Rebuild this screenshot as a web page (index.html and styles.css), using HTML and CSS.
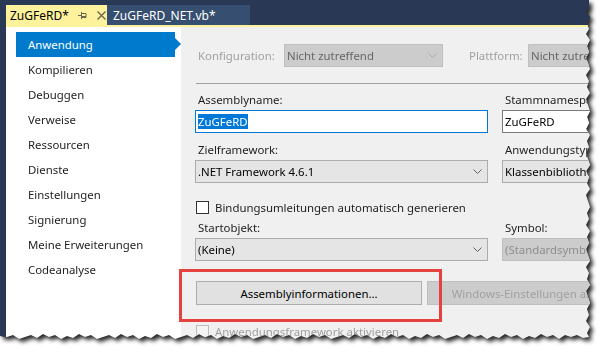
FILE: index.html
```html
<!DOCTYPE html>
<html lang="de">
<head>
<meta charset="utf-8">
<title>ZuGFeRD – Anwendung</title>
<link rel="stylesheet" href="styles.css">
</head>
<body>
<div class="frame">
  <div class="window">
    <div class="tabbar">
      <div class="tab tab-active">
        <span class="tab-title">ZuGFeRD*</span>
        <svg class="tab-pin" width="9" height="8" viewBox="0 0 9 8"><path d="M0 4.5H3M3.5 1V8M3.5 2.5H8V6.5H3.5M3.5 5.5H8" fill="none" stroke="#6b6850" stroke-width="1"/></svg>
        <svg class="tab-close" width="9" height="9" viewBox="0 0 9 9"><path d="M0.5 0.5L8.5 8.5M8.5 0.5L0.5 8.5" stroke="#6b6850" stroke-width="1.4"/></svg>
      </div>
      <div class="tab tab-inactive">ZuGFeRD_NET.vb*</div>
    </div>
    <div class="main">
      <div class="edge"></div>
      <div class="panel">
        <ul class="nav">
          <li class="nav-item nav-selected">Anwendung</li>
          <li class="nav-item">Kompilieren</li>
          <li class="nav-item">Debuggen</li>
          <li class="nav-item">Verweise</li>
          <li class="nav-item">Ressourcen</li>
          <li class="nav-item">Dienste</li>
          <li class="nav-item">Einstellungen</li>
          <li class="nav-item">Signierung</li>
          <li class="nav-item">Meine Erweiterungen</li>
          <li class="nav-item">Codeanalyse</li>
        </ul>
        <div class="content">
          <div class="cfg-row">
            <span class="cfg-label cfg-label-1 disabled-text">Konfiguration:</span>
            <div class="select select-disabled cfg-select-1">
              <span>Nicht zutreffend</span>
              <svg class="chev" width="9" height="5" viewBox="0 0 9 5"><polyline points="0.5,0.5 4.5,4.5 8.5,0.5" fill="none" stroke="#a8a8a8" stroke-width="1"/></svg>
            </div>
            <span class="cfg-label cfg-label-2 disabled-text">Plattform:</span>
            <div class="select select-disabled cfg-select-2">
              <span>Nicht zutreffend</span>
            </div>
          </div>
          <div class="sep"></div>

          <div class="grid grid-top">
            <div class="field">
              <label class="lbl">Assemblyname:</label>
              <div class="textbox textbox-focus"><span class="selected-text">ZuGFeRD</span></div>
            </div>
            <div class="field">
              <label class="lbl">Stammnamespace:</label>
              <div class="textbox">ZuGFeRD</div>
            </div>
            <div class="field">
              <label class="lbl">Zielframework:</label>
              <div class="select">
                <span>.NET Framework 4.6.1</span>
                <svg class="chev" width="9" height="5" viewBox="0 0 9 5"><polyline points="0.5,0.5 4.5,4.5 8.5,0.5" fill="none" stroke="#606060" stroke-width="1"/></svg>
              </div>
            </div>
            <div class="field">
              <label class="lbl">Anwendungstyp:</label>
              <div class="select"><span>Klassenbibliothek</span></div>
            </div>
          </div>

          <div class="check-row check-row-1">
            <span class="checkbox"></span>
            <span>Bindungsumleitungen automatisch generieren</span>
          </div>

          <div class="grid grid-start">
            <div class="field">
              <label class="lbl">Startobjekt:</label>
              <div class="select">
                <span>(Keine)</span>
                <svg class="chev" width="9" height="5" viewBox="0 0 9 5"><polyline points="0.5,0.5 4.5,4.5 8.5,0.5" fill="none" stroke="#606060" stroke-width="1"/></svg>
              </div>
            </div>
            <div class="field">
              <label class="lbl">Symbol:</label>
              <div class="select select-disabled select-dim"><span>(Standardsymbol)</span></div>
            </div>
          </div>

          <div class="btn-row">
            <button class="btn">Assemblyinformationen...</button>
            <button class="btn btn-disabled">Windows-Einstellungen anzeigen</button>
          </div>

          <div class="check-row check-row-2 disabled-text">
            <span class="checkbox checkbox-disabled"></span>
            <span>Anwendungsframework aktivieren</span>
          </div>
        </div>
      </div>
    </div>
    <div class="highlight"></div>
  </div>
</div>
</body>
</html>
```

FILE: styles.css
```css
* { box-sizing: border-box; }

html, body {
  margin: 0;
  padding: 0;
  background: #ffffff;
}

body {
  font-family: "Noto Sans", "Open Sans", sans-serif;
  font-size: 11.4px;
  color: #1e1e1e;
  width: 607px;
  height: 356px;
  overflow: hidden;
}

.frame {
  filter: drop-shadow(3px 3px 2px rgba(0, 0, 0, 0.85));
  width: 598px;
  height: 350px;
}

.window {
  position: relative;
  width: 592px;
  height: 342px;
  display: flex;
  flex-direction: column;
  background: #293955;
  clip-path: polygon(
    0 0, 589px 0, 589px 8px, 586px 12px, 590px 17px, 587px 23px, 589px 29px, 586px 34px,
    590px 40px, 587px 46px, 589px 52px, 586px 58px, 588px 63px, 590px 69px, 586px 75px,
    589px 81px, 587px 87px, 590px 93px, 586px 99px, 588px 105px, 590px 111px, 587px 117px,
    589px 123px, 586px 129px, 590px 135px, 587px 141px, 589px 147px, 586px 153px, 588px 159px,
    590px 165px, 586px 171px, 589px 177px, 587px 183px, 590px 189px, 586px 195px, 588px 201px,
    590px 207px, 587px 213px, 589px 219px, 586px 225px, 590px 231px, 587px 237px, 589px 243px,
    586px 249px, 588px 255px, 590px 261px, 586px 267px, 589px 273px, 587px 279px, 590px 285px,
    586px 291px, 588px 297px, 590px 303px, 587px 309px, 589px 315px, 586px 321px, 590px 327px,
    587px 333px, 589px 337px,
    583px 338px, 577px 335px, 571px 337px, 565px 335px, 559px 339px, 553px 335px, 547px 337px,
    541px 334px, 535px 338px, 529px 336px, 523px 339px, 517px 335px, 511px 337px, 505px 334px,
    499px 338px, 493px 336px, 487px 339px, 481px 335px, 475px 337px, 469px 334px, 463px 338px,
    457px 335px, 451px 337px, 445px 339px, 439px 335px, 433px 337px, 427px 334px, 421px 338px,
    415px 336px, 409px 339px, 403px 335px, 397px 337px, 391px 334px, 385px 338px, 379px 336px,
    373px 339px, 367px 335px, 361px 337px, 355px 334px, 349px 338px, 343px 335px, 337px 337px,
    331px 339px, 325px 335px, 319px 337px, 313px 334px, 307px 338px, 301px 336px, 295px 339px,
    289px 335px, 283px 337px, 277px 334px, 271px 338px, 265px 335px, 259px 337px, 253px 339px,
    247px 335px, 241px 337px, 235px 334px, 229px 338px, 223px 336px, 217px 339px, 211px 335px,
    205px 337px, 199px 334px, 193px 338px, 187px 335px, 181px 337px, 175px 339px, 169px 335px,
    163px 337px, 157px 334px, 151px 338px, 145px 336px, 139px 339px, 133px 335px, 127px 337px,
    121px 334px, 115px 338px, 109px 335px, 103px 337px, 97px 339px, 91px 335px, 85px 337px,
    79px 334px, 73px 338px, 67px 336px, 61px 339px, 55px 335px, 49px 337px, 43px 334px,
    37px 338px, 31px 335px, 25px 337px, 19px 339px, 13px 335px, 7px 337px, 0 336px
  );
}

/* ---------- tab bar ---------- */
.tabbar {
  height: 25px;
  flex: none;
  display: flex;
  align-items: flex-end;
  padding-left: 6px;
  background: #293955;
}

.tab {
  height: 20px;
  display: flex;
  align-items: center;
  font-size: 12px;
  white-space: nowrap;
}

.tab-active {
  width: 101px;
  background: #fff29d;
  color: #000000;
  padding-left: 4px;
}

.tab-title { width: 64px; }

.tab-pin { margin-left: 4px; }

.tab-close { margin-left: 10px; }

.tab-inactive {
  width: 143px;
  background: #364e6f;
  color: #ffffff;
  padding-left: 6px;
}

/* ---------- main ---------- */
.main {
  flex: 1;
  display: flex;
  min-height: 0;
}

.edge {
  width: 6px;
  flex: none;
  background: #293955;
}

.panel {
  flex: 1;
  display: flex;
  border-top: 2px solid #fff29d;
  min-width: 0;
}

/* ---------- nav ---------- */
.nav {
  list-style: none;
  margin: 0;
  padding: 5px 0 0 0;
  width: 175px;
  flex: none;
  background: #ffffff;
}

.nav-item {
  position: relative;
  height: 25px;
  width: 159px;
  margin-left: 10px;
  padding-left: 12px;
  display: flex;
  align-items: center;
  color: #1e1e1e;
  white-space: nowrap;
}

.nav-selected {
  background: #007acc;
  color: #ffffff;
}

.nav-selected::after {
  content: "";
  position: absolute;
  left: 159px;
  top: 6px;
  border-left: 6px solid #007acc;
  border-top: 6px solid transparent;
  border-bottom: 6px solid transparent;
}

/* ---------- content ---------- */
.content {
  flex: 1;
  background: #f0f0f0;
  padding: 17px 0 0 14px;
  overflow: hidden;
  min-width: 0;
}

.disabled-text { color: #a0a0a0; }

.cfg-row {
  display: flex;
  align-items: center;
  height: 23px;
  white-space: nowrap;
}

.cfg-label { padding-left: 3px; flex: none; }
.cfg-label-1 { width: 89px; }
.cfg-label-2 { width: 62px; margin-left: 23px; }

.cfg-select-1 { width: 159px; flex: none; padding-right: 6px; }
.cfg-select-2 { width: 160px; flex: none; }

.sep {
  height: 1px;
  background: #a0a0a0;
  margin: 16px 0 0 1px;
  width: 420px;
}

.grid {
  display: grid;
  grid-template-columns: 293px 170px;
  column-gap: 14px;
  row-gap: 9px;
}

.grid-top { margin-top: 8px; }
.grid-start { margin-top: 5px; }

.field {
  display: flex;
  flex-direction: column;
  gap: 2px;
  min-width: 0;
}

.lbl {
  padding-left: 3px;
  line-height: 16px;
  height: 16px;
  white-space: nowrap;
  color: #1e1e1e;
}

.textbox {
  height: 23px;
  background: #ffffff;
  border: 1px solid #7a7a7a;
  padding-left: 2px;
  display: flex;
  align-items: center;
  white-space: nowrap;
  color: #000000;
}

.textbox-focus { border-color: #0078d7; }

.selected-text {
  background: #0078d7;
  color: #ffffff;
  line-height: 15px;
}

.select {
  height: 23px;
  background: #e5e5e5;
  border: 1px solid #acacac;
  padding: 0 5px 0 2px;
  display: flex;
  align-items: center;
  white-space: nowrap;
  overflow: hidden;
  color: #000000;
}

.select-disabled {
  background: #cccccc;
  border-color: #bfbfbf;
  color: #666666;
}

.select-dim { color: #8d8d8d; }

.chev { margin-left: auto; flex: none; }

.check-row {
  display: flex;
  align-items: center;
  gap: 6px;
  height: 16px;
  padding-left: 1px;
  white-space: nowrap;
}

.check-row-1 { margin-top: 16px; }
.check-row-2 { margin-top: 18px; }

.checkbox {
  width: 13px;
  height: 13px;
  flex: none;
  background: #ffffff;
  border: 1px solid #333333;
}

.checkbox-disabled {
  border-color: #bcbcbc;
  background: #f4f4f4;
}

.btn-row {
  display: flex;
  gap: 5px;
  margin-top: 20px;
  margin-left: 1px;
}

.btn {
  font-family: inherit;
  font-size: inherit;
  height: 24px;
  width: 226px;
  flex: none;
  background: #e1e1e1;
  border: 1px solid #adadad;
  color: #000000;
  padding: 0;
  white-space: nowrap;
}

.btn-disabled {
  background: #cccccc;
  border-color: #bfbfbf;
  color: #a0a0a0;
  overflow: hidden;
}

/* annotation overlay */
.highlight {
  position: absolute;
  left: 179px;
  top: 269px;
  width: 263px;
  height: 53px;
  border: 3px solid #e5413f;
  pointer-events: none;
}
```
